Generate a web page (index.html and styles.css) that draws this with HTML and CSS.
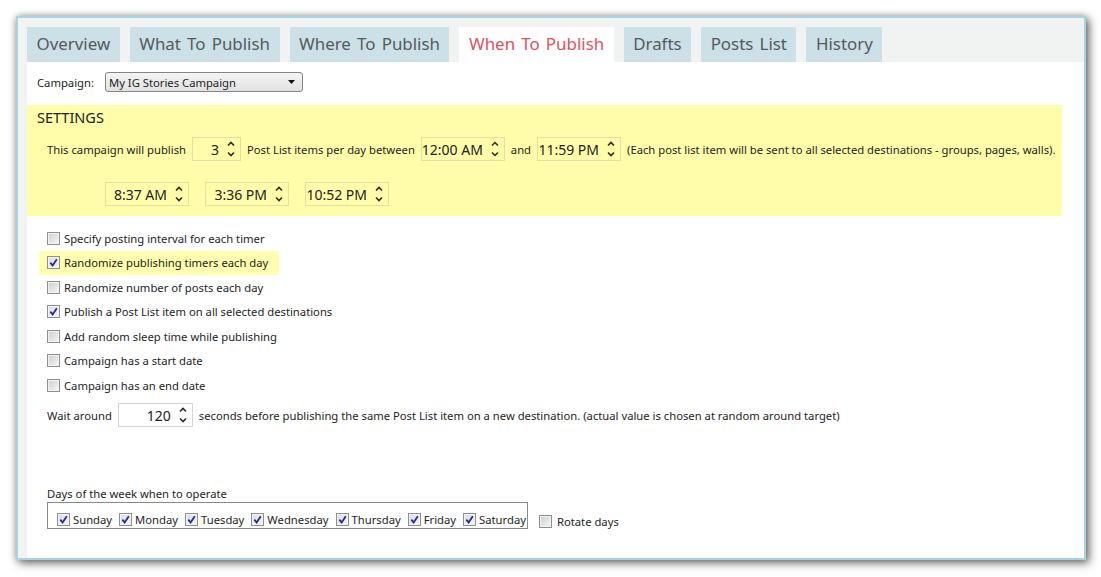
FILE: index.html
```html
<!DOCTYPE html>
<html>
<head>
<meta charset="utf-8">
<link rel="stylesheet" href="styles.css">
</head>
<body>
<div class="window">
  <div class="tabs">
    <div class="tab">Overview</div>
    <div class="tab">What To Publish</div>
    <div class="tab">Where To Publish</div>
    <div class="tab active">When To Publish</div>
    <div class="tab">Drafts</div>
    <div class="tab">Posts List</div>
    <div class="tab">History</div>
  </div>
  <div class="content">
    <div class="campaign-row">
      <span>Campaign:</span>
      <div class="select">
        <span>My IG Stories Campaign</span>
        <svg width="7" height="4" viewBox="0 0 7 4"><path d="M0 0H7L3.5 4Z" fill="#111"/></svg>
      </div>
    </div>

    <section class="settings">
      <div class="settings-title">SETTINGS</div>
      <div class="row1">
        <span>This campaign will publish</span>
        <div class="spin spin-n"><span class="val">3</span><svg class="arr" width="8" height="18" viewBox="0 0 8 18"><path d="M1 5.5L4 2.5L7 5.5M1 12.5L4 15.5L7 12.5" fill="none" stroke="#2a2a2a" stroke-width="1.6"/></svg></div>
        <span>Post List items per day between</span>
        <div class="spin spin-t"><span class="val">12:00 AM</span><svg class="arr" width="8" height="18" viewBox="0 0 8 18"><path d="M1 5.5L4 2.5L7 5.5M1 12.5L4 15.5L7 12.5" fill="none" stroke="#2a2a2a" stroke-width="1.6"/></svg></div>
        <span>and</span>
        <div class="spin spin-t"><span class="val">11:59 PM</span><svg class="arr" width="8" height="18" viewBox="0 0 8 18"><path d="M1 5.5L4 2.5L7 5.5M1 12.5L4 15.5L7 12.5" fill="none" stroke="#2a2a2a" stroke-width="1.6"/></svg></div>
        <span>(Each post list item will be sent to all selected destinations - groups, pages, walls).</span>
      </div>
      <div class="row2">
        <div class="spin spin-t"><span class="val">8:37 AM</span><svg class="arr" width="8" height="18" viewBox="0 0 8 18"><path d="M1 5.5L4 2.5L7 5.5M1 12.5L4 15.5L7 12.5" fill="none" stroke="#2a2a2a" stroke-width="1.6"/></svg></div>
        <div class="spin spin-t"><span class="val">3:36 PM</span><svg class="arr" width="8" height="18" viewBox="0 0 8 18"><path d="M1 5.5L4 2.5L7 5.5M1 12.5L4 15.5L7 12.5" fill="none" stroke="#2a2a2a" stroke-width="1.6"/></svg></div>
        <div class="spin spin-t"><span class="val">10:52 PM</span><svg class="arr" width="8" height="18" viewBox="0 0 8 18"><path d="M1 5.5L4 2.5L7 5.5M1 12.5L4 15.5L7 12.5" fill="none" stroke="#2a2a2a" stroke-width="1.6"/></svg></div>
      </div>
    </section>

    <div class="options">
      <div class="opt"><span class="cb"></span><span>Specify posting interval for each timer</span></div>
      <div class="opt hl"><span class="cb on"><svg width="9" height="9" viewBox="0 0 9 9"><path d="M1.3 4.6L3.6 7.4L7.8 1.2" fill="none" stroke="#2b2b86" stroke-width="1.8"/></svg></span><span>Randomize publishing timers each day</span></div>
      <div class="opt"><span class="cb"></span><span>Randomize number of posts each day</span></div>
      <div class="opt"><span class="cb on"><svg width="9" height="9" viewBox="0 0 9 9"><path d="M1.3 4.6L3.6 7.4L7.8 1.2" fill="none" stroke="#2b2b86" stroke-width="1.8"/></svg></span><span>Publish a Post List item on all selected destinations</span></div>
      <div class="opt"><span class="cb"></span><span>Add random sleep time while publishing</span></div>
      <div class="opt"><span class="cb"></span><span>Campaign has a start date</span></div>
      <div class="opt"><span class="cb"></span><span>Campaign has an end date</span></div>
    </div>

    <div class="wait-row">
      <span>Wait around</span>
      <div class="spin spin-w"><span class="val">120</span><svg class="arr" width="8" height="18" viewBox="0 0 8 18"><path d="M1 5.5L4 2.5L7 5.5M1 12.5L4 15.5L7 12.5" fill="none" stroke="#2a2a2a" stroke-width="1.6"/></svg></div>
      <span>seconds before publishing the same Post List item on a new destination. (actual value is chosen at random around target)</span>
    </div>

    <div class="days">
      <div class="days-label">Days of the week when to operate</div>
      <div class="days-row">
        <div class="days-box">
          <div class="day"><span class="cb on"><svg width="9" height="9" viewBox="0 0 9 9"><path d="M1.3 4.6L3.6 7.4L7.8 1.2" fill="none" stroke="#2b2b86" stroke-width="1.8"/></svg></span><span>Sunday</span></div>
          <div class="day"><span class="cb on"><svg width="9" height="9" viewBox="0 0 9 9"><path d="M1.3 4.6L3.6 7.4L7.8 1.2" fill="none" stroke="#2b2b86" stroke-width="1.8"/></svg></span><span>Monday</span></div>
          <div class="day"><span class="cb on"><svg width="9" height="9" viewBox="0 0 9 9"><path d="M1.3 4.6L3.6 7.4L7.8 1.2" fill="none" stroke="#2b2b86" stroke-width="1.8"/></svg></span><span>Tuesday</span></div>
          <div class="day"><span class="cb on"><svg width="9" height="9" viewBox="0 0 9 9"><path d="M1.3 4.6L3.6 7.4L7.8 1.2" fill="none" stroke="#2b2b86" stroke-width="1.8"/></svg></span><span>Wednesday</span></div>
          <div class="day"><span class="cb on"><svg width="9" height="9" viewBox="0 0 9 9"><path d="M1.3 4.6L3.6 7.4L7.8 1.2" fill="none" stroke="#2b2b86" stroke-width="1.8"/></svg></span><span>Thursday</span></div>
          <div class="day"><span class="cb on"><svg width="9" height="9" viewBox="0 0 9 9"><path d="M1.3 4.6L3.6 7.4L7.8 1.2" fill="none" stroke="#2b2b86" stroke-width="1.8"/></svg></span><span>Friday</span></div>
          <div class="day"><span class="cb on"><svg width="9" height="9" viewBox="0 0 9 9"><path d="M1.3 4.6L3.6 7.4L7.8 1.2" fill="none" stroke="#2b2b86" stroke-width="1.8"/></svg></span><span>Saturday</span></div>
        </div>
        <div class="rotate"><span class="cb"></span><span>Rotate days</span></div>
      </div>
    </div>
  </div>
</div>
</body>
</html>
```

FILE: styles.css
```css
html, body {
  margin: 0;
  background: #ffffff;
}
body {
  padding: 16px;
  font-family: "Noto Sans", "Open Sans", sans-serif;
  font-size: 11.25px;
  color: #1e1e1e;
}
.window {
  width: 1070px;
  height: 544px;
  box-sizing: border-box;
  border: 2px solid #a8d3e2;
  background: #f1f3f3;
  box-shadow: 3px 3px 9px rgba(0,0,0,0.55), 0 0 7px rgba(0,0,0,0.25);
  padding: 9px 0 0 9px;
  display: flex;
  flex-direction: column;
}
.tabs {
  display: flex;
  gap: 10px;
  height: 35px;
  flex: none;
}
.tab {
  padding: 0 9.5px;
  background: #cce0e8;
  color: #545a5c;
  font-size: 16.9px;
  line-height: 34px;
  word-spacing: 1.8px;
  white-space: nowrap;
}
.tab.active {
  background: #ffffff;
  color: #de525c;
}
.content {
  flex: 1;
  background: #ffffff;
}
.campaign-row {
  display: flex;
  align-items: center;
  gap: 11px;
  height: 20px;
  margin-top: 10px;
  padding-left: 10px;
}
.select {
  width: 198px;
  height: 20px;
  box-sizing: border-box;
  border: 1px solid #858585;
  border-radius: 3px;
  background: linear-gradient(#f4f4f4, #e2e2e2);
  display: flex;
  align-items: center;
  justify-content: space-between;
  padding: 0 7px 0 3px;
}
.settings {
  margin: 13px 22px 0 0;
  background: #fffda9;
  padding: 3px 0 10px 10px;
}
.settings-title {
  font-size: 14.5px;
  line-height: 19px;
  color: #222;
}
.row1 {
  display: flex;
  align-items: center;
  gap: 6px;
  height: 24px;
  margin-top: 10px;
  padding-left: 10px;
  white-space: nowrap;
}
.row2 {
  display: flex;
  align-items: center;
  gap: 16px;
  height: 24px;
  margin-top: 21px;
  padding-left: 68px;
}
.spin {
  height: 24px;
  box-sizing: border-box;
  border: 1px solid #e3dfa3;
  display: flex;
  align-items: center;
  justify-content: flex-end;
  gap: 8px;
  padding-right: 5px;
  flex: none;
}
.spin .val {
  font-size: 14px;
  color: #222;
}
.spin .arr {
  display: block;
}
.spin-n { width: 49px; }
.spin-t { width: 84px; }
.spin-w {
  width: 75px;
  background: #ffffff;
  border-color: #d4d4d4;
}
.options {
  display: flex;
  flex-direction: column;
  align-items: flex-start;
  margin: 10px 0 0 12px;
}
.opt {
  height: 24.5px;
  display: flex;
  align-items: center;
  gap: 4px;
  padding: 0 11px 0 8px;
}
.opt.hl {
  background: #ffffaf;
}
.cb {
  width: 13px;
  height: 13px;
  box-sizing: border-box;
  border: 1px solid #8e8f8f;
  background: linear-gradient(135deg, #cdcfd0 0%, #f6f6f6 100%);
  box-shadow: inset 0 0 0 1px #f3f3f3;
  display: flex;
  align-items: center;
  justify-content: center;
  flex: none;
}
.cb.on {
  background: linear-gradient(135deg, #d9dbe6 0%, #f6f6fa 100%);
}
.cb svg {
  display: block;
}
.wait-row {
  display: flex;
  align-items: center;
  gap: 6px;
  height: 24px;
  margin-top: 5.5px;
  padding-left: 20px;
  white-space: nowrap;
}
.days {
  margin-top: 59px;
  padding-left: 20px;
}
.days-label {
  line-height: 16px;
}
.days-row {
  display: flex;
  align-items: flex-end;
}
.days-box {
  height: 27px;
  box-sizing: border-box;
  border: 1px solid #8a8a8a;
  display: flex;
  align-items: flex-end;
  gap: 7px;
  padding: 0 1px 1px 9px;
}
.day {
  display: flex;
  align-items: center;
  gap: 3px;
  white-space: nowrap;
}
.rotate {
  display: flex;
  align-items: center;
  gap: 5px;
  margin-left: 11px;
}
```
